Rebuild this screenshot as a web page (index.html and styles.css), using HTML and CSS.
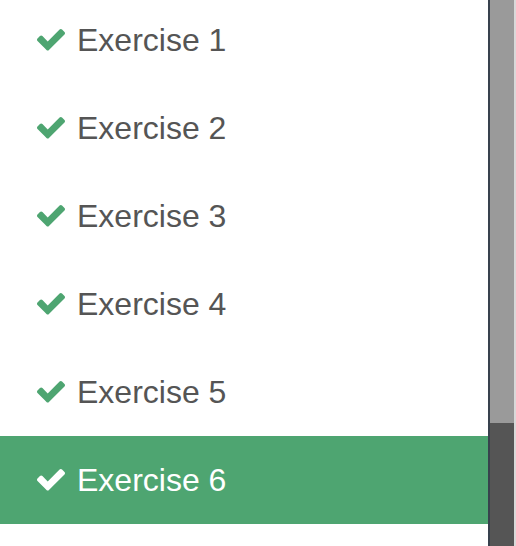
FILE: index.html
```html
<!DOCTYPE html>
<html>
<head>
<meta charset="utf-8">
<link rel="stylesheet" href="styles.css">
</head>
<body>
<div class="layout">
  <ul class="list">
    <li class="item"><svg class="check" viewBox="121 334 1550 1188"><path d="M1671 566q0 40-28 68l-724 724-136 136q-28 28-68 28t-68-28l-136-136-362-362q-28-28-28-68t28-68l136-136q28-28 68-28t68 28l294 295 656-657q28-28 68-28t68 28l136 136q28 28 28 68z"/></svg><span>Exercise 1</span></li>
    <li class="item"><svg class="check" viewBox="121 334 1550 1188"><path d="M1671 566q0 40-28 68l-724 724-136 136q-28 28-68 28t-68-28l-136-136-362-362q-28-28-28-68t28-68l136-136q28-28 68-28t68 28l294 295 656-657q28-28 68-28t68 28l136 136q28 28 28 68z"/></svg><span>Exercise 2</span></li>
    <li class="item"><svg class="check" viewBox="121 334 1550 1188"><path d="M1671 566q0 40-28 68l-724 724-136 136q-28 28-68 28t-68-28l-136-136-362-362q-28-28-28-68t28-68l136-136q28-28 68-28t68 28l294 295 656-657q28-28 68-28t68 28l136 136q28 28 28 68z"/></svg><span>Exercise 3</span></li>
    <li class="item"><svg class="check" viewBox="121 334 1550 1188"><path d="M1671 566q0 40-28 68l-724 724-136 136q-28 28-68 28t-68-28l-136-136-362-362q-28-28-28-68t28-68l136-136q28-28 68-28t68 28l294 295 656-657q28-28 68-28t68 28l136 136q28 28 28 68z"/></svg><span>Exercise 4</span></li>
    <li class="item"><svg class="check" viewBox="121 334 1550 1188"><path d="M1671 566q0 40-28 68l-724 724-136 136q-28 28-68 28t-68-28l-136-136-362-362q-28-28-28-68t28-68l136-136q28-28 68-28t68 28l294 295 656-657q28-28 68-28t68 28l136 136q28 28 28 68z"/></svg><span>Exercise 5</span></li>
    <li class="item active"><svg class="check" viewBox="121 334 1550 1188"><path d="M1671 566q0 40-28 68l-724 724-136 136q-28 28-68 28t-68-28l-136-136-362-362q-28-28-28-68t28-68l136-136q28-28 68-28t68 28l294 295 656-657q28-28 68-28t68 28l136 136q28 28 28 68z"/></svg><span>Exercise 6</span></li>
  </ul>
  <div class="divider"></div>
  <div class="scrollbar">
    <div class="thumb"></div>
    <div class="track"></div>
  </div>
  <div class="edge"></div>
</div>
</body>
</html>
```
FILE: styles.css
```css
html, body {
  margin: 0;
  padding: 0;
  background: #ffffff;
}
.layout {
  display: flex;
  height: 546px;
  overflow: hidden;
}
.list {
  flex: 0 0 488px;
  list-style: none;
  margin: -4px 0 0 0;
  padding: 0;
  font-family: "Liberation Sans", Arial, sans-serif;
  font-size: 32px;
  color: #555555;
}
.item {
  height: 88px;
  display: flex;
  align-items: center;
  gap: 12px;
  padding-left: 37px;
}
.check {
  width: 28px;
  height: 21.5px;
  fill: #4ea571;
  flex: none;
}
.item.active {
  background: #4ea571;
  color: #ffffff;
}
.item.active .check {
  fill: #ffffff;
}
.divider {
  flex: 0 0 2px;
  background: #38414d;
}
.scrollbar {
  flex: 0 0 24px;
  display: flex;
  flex-direction: column;
}
.thumb {
  height: 423px;
  background: #9a9a9a;
}
.track {
  flex: 1;
  background: #555555;
}
.edge {
  flex: 0 0 2px;
  background: #d9d9d9;
}
```
